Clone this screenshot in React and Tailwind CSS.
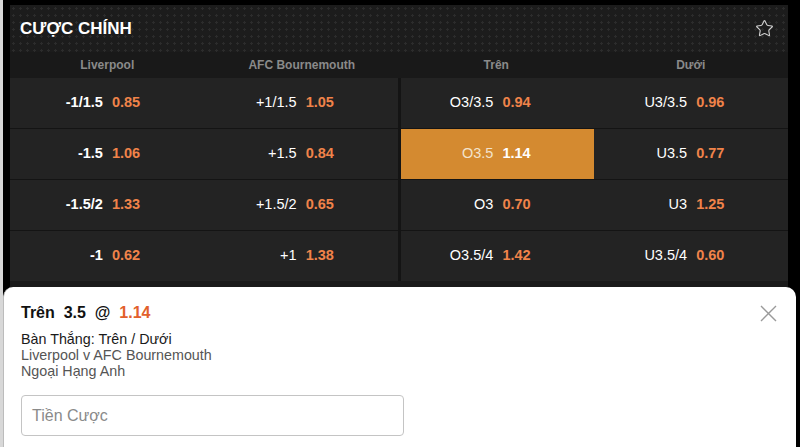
import React from 'react';
import { Star } from 'lucide-react';

const rows = [
  [['-1/1.5', '0.85'], ['+1/1.5', '1.05'], ['O3/3.5', '0.94'], ['U3/3.5', '0.96']],
  [['-1.5', '1.06'], ['+1.5', '0.84'], ['O3.5', '1.14', true], ['U3.5', '0.77']],
  [['-1.5/2', '1.33'], ['+1.5/2', '0.65'], ['O3', '0.70'], ['U3', '1.25']],
  [['-1', '0.62'], ['+1', '1.38'], ['O3.5/4', '1.42'], ['U3.5/4', '0.60']],
];

function Cell({ label, odds, active, boldLabel }) {
  return (
    <div
      className={
        'grid grid-cols-2 items-center h-[50px] text-[14.5px] ' +
        (active ? 'bg-[#d48a30]' : 'bg-[#232323]')
      }
    >
      <span
        className={
          'text-right pr-[4px] ' +
          (active ? 'text-[#f3e3cc]' : 'text-white') +
          (boldLabel ? ' font-bold' : '')
        }
      >
        {label}
      </span>
      <span
        className={
          'pl-[5px] font-bold ' + (active ? 'text-white' : 'text-[#f0834a]')
        }
      >
        {odds}
      </span>
    </div>
  );
}

export default function App() {
  return (
    <div
      className="relative w-[800px] h-[447px] overflow-hidden bg-black flex"
      style={{ fontFamily: '"Liberation Sans", Arial, sans-serif' }}
    >
      <div className="w-[3px] bg-[#d8d8d8]" />
      <div className="flex-1 pl-[7px] pr-[12px] pt-[5px]">
        {/* header */}
        <div className="h-[47px] flex items-center justify-between pl-[10px] pr-[14px] bg-[#1c1c1c] bg-[radial-gradient(#2c2c2c_1px,transparent_1.2px)] bg-[size:7px_7px]">
          <span className="text-white font-bold text-[17px]">CƯỢC CHÍNH</span>
          <Star size={19} strokeWidth={1.4} className="text-[#d0d0d0]" />
        </div>

        {/* column labels */}
        <div className="h-[26px] bg-[#191919] grid grid-cols-4 items-center text-[12px] font-bold text-[#8a8a8a]">
          <span className="text-center">Liverpool</span>
          <span className="text-center">AFC Bournemouth</span>
          <span className="text-center">Trên</span>
          <span className="text-center">Dưới</span>
        </div>

        {/* odds rows */}
        <div className="flex flex-col gap-px bg-[#141414]">
          {rows.map((r, i) => (
            <div key={i} className="grid grid-cols-2 gap-[3px]">
              <div className="grid grid-cols-2">
                <Cell label={r[0][0]} odds={r[0][1]} boldLabel />
                <Cell label={r[1][0]} odds={r[1][1]} />
              </div>
              <div className="grid grid-cols-2">
                <Cell label={r[2][0]} odds={r[2][1]} active={r[2][2]} />
                <Cell label={r[3][0]} odds={r[3][1]} />
              </div>
            </div>
          ))}
        </div>
        <div className="h-[7px] bg-[#1a1a1a]" />
      </div>

      {/* bet slip sheet */}
      <div className="absolute left-[3px] right-[4px] top-[287px] bottom-0 bg-white rounded-t-[10px] pl-[17px] pr-[18px] pt-[17px] border-l border-[#bcbcbc]">
        <div className="flex items-center justify-between h-[18px]">
          <span className="text-[16px] font-bold text-[#111] whitespace-pre">
            {'Trên  3.5  @  '}
            <span className="text-[#e2602c]">1.14</span>
          </span>
          <svg width="17" height="17" viewBox="0 0 17 17" className="mr-[1px]">
            <path d="M1 1L16 16M16 1L1 16" stroke="#9a9a9a" strokeWidth="1.4" />
          </svg>
        </div>
        <div className="mt-[9px] text-[14.3px] leading-[16px]">
          <div className="text-[#1a1a1a]">Bàn Thắng: Trên / Dưới</div>
          <div className="text-[#555]">Liverpool v AFC Bournemouth</div>
          <div className="text-[#555]">Ngoại Hạng Anh</div>
        </div>
        <div className="mt-[16px] w-[383px] h-[41px] border border-[#c4c4c4] rounded-[4px] flex items-center pl-[10px] text-[16px] text-[#8a8a8a]">
          Tiền Cược
        </div>
      </div>
    </div>
  );
}
